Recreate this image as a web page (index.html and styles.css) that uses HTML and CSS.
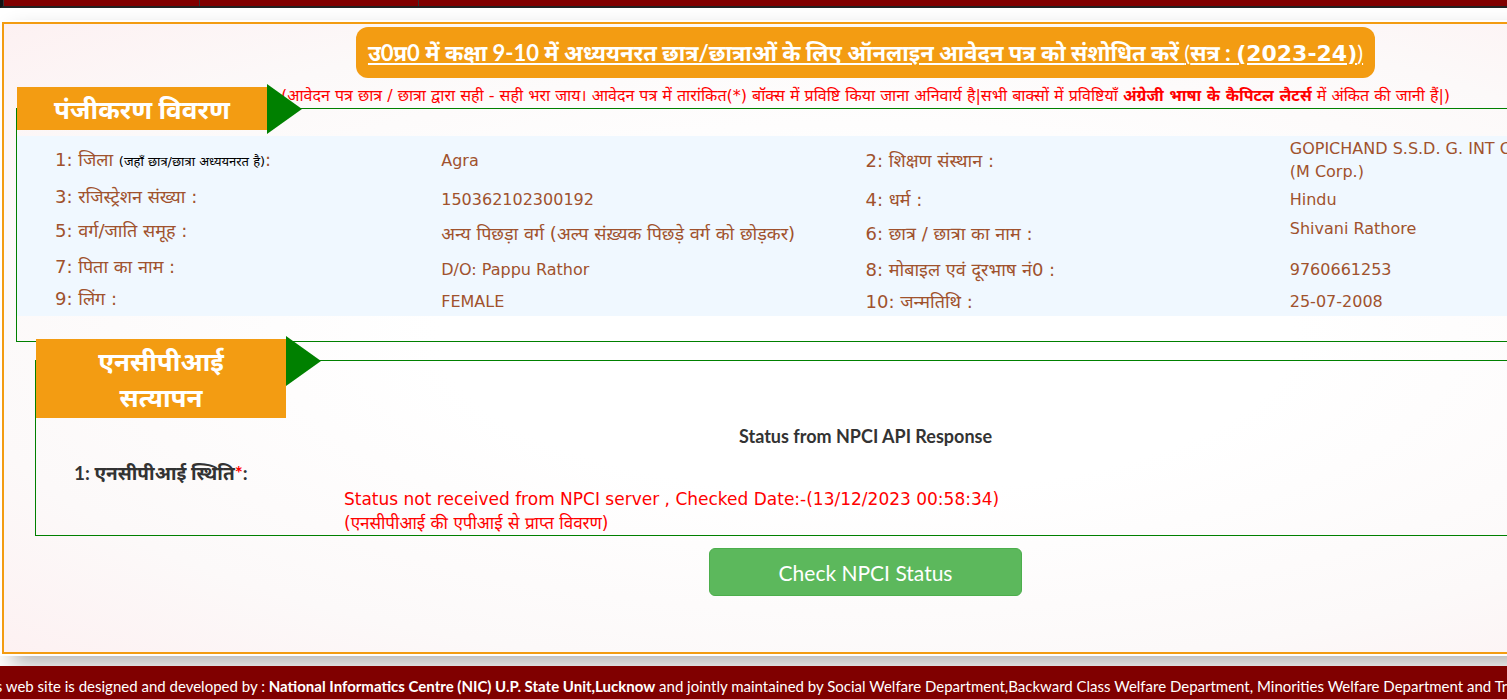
FILE: index.html
```html
<!DOCTYPE html>
<html lang="hi">
<head>
<meta charset="utf-8">
<title>NPCI Status</title>
<link rel="stylesheet" href="styles.css">
</head>
<body>
<div class="page">
  <nav class="menu" aria-label="Main"><span class="menu-cell"></span><span class="menu-cell wide"></span></nav>
  <main class="panel">
    <h1 class="title">उ0प्र0 में कक्षा 9-10 में अध्ययनरत छात्र/छात्राओं के लिए ऑनलाइन आवेदन पत्र को संशोधित करें <span class="light">(</span>सत्र : <span class="session">(2023-24)</span><span class="light">)</span></h1>
    <p class="note">(आवेदन पत्र छात्र / छात्रा द्वारा सही - सही भरा जाय। आवेदन पत्र में तारांकित(*) बॉक्स में प्रविष्टि किया जाना अनिवार्य है|सभी बाक्सों में प्रविष्टियाँ <strong>अंग्रेजी भाषा के कैपिटल लैटर्स</strong> में अंकित की जानी हैं|)</p>

    <section class="box">
      <h2 class="tag">पंजीकरण विवरण</h2>
      <table class="details">
        <tr class="r1"><th scope="row">1: जिला <small>(जहाँ छात्र/छात्रा अध्ययनरत है)</small>:</th><td>Agra</td><th scope="row">2: शिक्षण संस्थान :</th><td>GOPICHAND S.S.D. G. INT COLLEGE AGRA<br>(M Corp.)</td></tr>
        <tr class="r2"><th scope="row">3: रजिस्ट्रेशन संख्या :</th><td>150362102300192</td><th scope="row">4: धर्म :</th><td>Hindu</td></tr>
        <tr class="r3"><th scope="row">5: वर्ग/जाति समूह :</th><td class="hindi">अन्य पिछड़ा वर्ग (अल्प संख़्यक पिछड़े वर्ग को छोड़कर)</td><th scope="row">6: छात्र / छात्रा का नाम :</th><td class="raised">Shivani Rathore</td></tr>
        <tr class="r4"><th scope="row">7: पिता का नाम :</th><td>D/O: Pappu Rathor</td><th scope="row">8: मोबाइल एवं दूरभाष नं0 :</th><td>9760661253</td></tr>
        <tr class="r5"><th scope="row">9: लिंग :</th><td>FEMALE</td><th scope="row">10: जन्मतिथि :</th><td>25-07-2008</td></tr>
      </table>
    </section>

    <section class="box inner">
      <h2 class="tag">एनसीपीआई सत्यापन</h2>
      <h3 class="heading">Status from NPCI API Response</h3>
      <p class="field">1: एनसीपीआई स्थिति<span class="req">*</span>:</p>
      <p class="status">Status not received from NPCI server , Checked Date:-(13/12/2023 00:58:34)<br>(एनसीपीआई की एपीआई से प्राप्त विवरण)</p>
    </section>

    <button class="check" type="button">Check NPCI Status</button>
  </main>
  <footer class="footer">This web site is designed and developed by : <strong>National Informatics Centre (NIC) U.P. State Unit,Lucknow</strong> and jointly maintained by Social Welfare Department,Backward Class Welfare Department, Minorities Welfare Department and Tribal Welfare Department</footer>
</div>
</body>
</html>
```
FILE: styles.css
```css
* { box-sizing: border-box; }
html { overflow: hidden; }
body {
  margin: 0;
  overflow: hidden;
  background: #fff;
  color: #333;
  font-family: "DejaVu Sans", "Noto Sans Devanagari", "Noto Sans", sans-serif;
  font-size: 16px;
}
h1, h2, h3, p { margin: 0; }

/* The form is wider than the window; its right part runs off screen. */
.page {
  width: 115%;
  min-height: 100vh;
  display: flex;
  flex-direction: column;
}
.menu {
  display: flex;
  height: 8px;
  background: #800000;
  border-bottom: 2px solid #222;
  border-left: 3px solid #111;
}
.menu-cell { width: 197px; border-left: 1px solid #333; border-right: 1px solid #333; }
.menu-cell.wide { width: 219px; border-left: 0; }

.panel {
  display: flex;
  flex-direction: column;
  margin: 14px 4px 0 2px;
  min-height: 632px;
  padding: 3px 12px 0;
  border: 2px solid #f39c12;
  background: radial-gradient(ellipse at center, #fff 0, #fff 35%, #fcf9f9 75%, #fdf1f2 100%);
  box-shadow: 0 0 0 2px #fff, 10px 10px 20px rgba(0, 0, 0, .3);
}
.title {
  align-self: center;
  padding: 0 12px;
  border-radius: 12px;
  background: #f39c12;
  color: #fff;
  font-family: Lato, "Noto Sans Devanagari", sans-serif;
  font-size: 22px;
  font-weight: 700;
  line-height: 51px;
  text-decoration: underline;
  white-space: nowrap;
}
.light { font-weight: 400; }
.session { font-family: "DejaVu Sans", sans-serif; line-height: 1; }
.note {
  padding-top: 6px;
  color: red;
  line-height: 24px;
  text-align: center;
  white-space: nowrap;
}
.box { border: 1px solid green; padding-bottom: 25px; }
.tag {
  position: relative;
  width: 250px;
  margin-top: -22px;
  padding: 4px 24px 3px;
  background: #f39c12;
  color: #fff;
  font-family: Lato, "Noto Sans Devanagari", sans-serif;
  font-size: 26px;
  font-weight: 700;
  line-height: 36px;
  text-align: center;
}
.tag::after {
  content: "";
  position: absolute;
  left: 100%;
  top: -3px;
  border: solid transparent;
  border-width: 25px 0 25px 35px;
  border-left-color: green;
}
.details {
  width: 100%;
  margin-top: 6px;
  table-layout: fixed;
  border-collapse: collapse;
  background: #f0f8ff;
  color: #a0522d;
  line-height: 23px;
}
.details th, .details td { padding: 0; font-weight: 400; text-align: left; vertical-align: middle; }
.details th, .details .hindi { font-size: 18px; }
.details th:first-child { padding: 0 0 6px 38px; }
.details .r1 th:first-child { padding-bottom: 0; }
.details small { color: #000; font-size: 13px; }
.details .raised { padding-bottom: 10px; }
.r1 { height: 48px; }
.r2 { height: 30px; }
.r3 { height: 38px; }
.r4 { height: 34px; }
.r5 { height: 30px; }

.inner { margin: 18px 19px 0; padding-bottom: 0; }
.heading {
  padding-top: 5px;
  font-family: Lato, sans-serif;
  font-size: 18px;
  font-weight: 700;
  line-height: 26px;
  text-align: center;
}
.field {
  padding: 11px 0 1px 38px;
  font-family: Lato, "Noto Sans Devanagari", sans-serif;
  font-size: 19px;
  font-weight: 700;
  line-height: 26px;
}
.req { color: red; }
.status { padding-left: 308px; color: red; font-size: 17px; line-height: 24px; }
.check {
  align-self: center;
  width: 313px;
  height: 48px;
  margin-top: 12px;
  border: 1px solid #4cae4c;
  border-radius: 6px;
  background: #5cb85c;
  color: #fff;
  font-family: Lato, sans-serif;
  font-size: 21px;
}
.footer {
  position: relative;
  flex: 1;
  margin-top: 12px;
  padding-top: 8px;
  background: #800000;
  color: #fff;
  font-family: Lato, sans-serif;
  font-size: 15px;
  line-height: 25px;
  text-indent: -25px;
  white-space: nowrap;
}
```
